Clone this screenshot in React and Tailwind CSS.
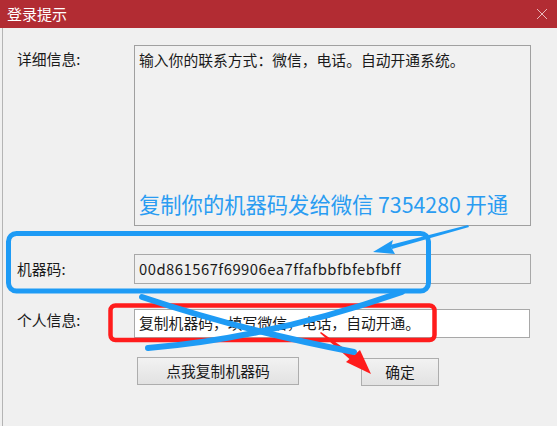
import React from "react";

const font = { fontFamily: '"Noto Sans CJK SC", "Noto Sans", sans-serif' };

function Annotations() {
  return (
    <svg
      className="absolute left-0 top-0 pointer-events-none"
      width="557"
      height="426"
      viewBox="0 0 557 426"
    >
      {/* blue box round machine code */}
      <rect x="8.5" y="233.5" width="420" height="57.5" rx="8" fill="none" stroke="#1e9bf5" strokeWidth="5" />
      {/* blue arrow */}
      <polygon points="468,225 469,227 392,249 390,245" fill="#1e9bf5" />
      <polygon points="373,252 393,240 391,247 395,254" fill="#1e9bf5" />
      {/* red box */}
      <rect x="110.5" y="305.5" width="324" height="34.5" rx="5" fill="none" stroke="#ff1c1c" strokeWidth="4.5" />
      {/* red arrow */}
      <polygon points="320,333 321,332 358,358 354,363" fill="#ff1c1c" />
      <polygon points="371,374 346,362 360,350" fill="#ff1c1c" />
      {/* blue cross scribble */}
      <path d="M142 297 Q 240 330 354 352" fill="none" stroke="#1e9bf5" strokeWidth="6" strokeLinecap="round" />
      <path d="M148 348 Q 270 338 402 292" fill="none" stroke="#1e9bf5" strokeWidth="6" strokeLinecap="round" />
    </svg>
  );
}

export default function App() {
  return (
    <div className="relative w-[557px] h-[426px] bg-[#f0f0f0] overflow-hidden" style={font}>
      {/* Title bar */}
      <div className="h-[28px] bg-[#b22c33] flex items-center justify-between pl-[7px] pr-[8px]">
        <span className="text-white text-[15px]">登录提示</span>
        <svg width="12" height="12" viewBox="0 0 12 12" className="mr-[1px]">
          <path d="M1 1 L11 11 M11 1 L1 11" stroke="#e9b9bb" strokeWidth="1" />
        </svg>
      </div>

      {/* Body */}
      <div className="ml-[2px] h-[398px] border-l border-[#b4b4b4] pl-[14px] pt-[17px] text-[14.8px] text-[#1a1a1a]">
        {/* details */}
        <div className="flex items-start">
          <div className="w-[117px] pt-[3px]">详细信息:</div>
          <div className="w-[397px] h-[181px] border border-[#a0a0a0] bg-[#f1f1f1] flex flex-col pl-[4px] pt-[3px] pb-[8px]">
            <div>输入你的联系方式：微信，电话。自动开通系统。</div>
            <div className="mt-auto text-[21.3px] text-[#2a9cf2] leading-[26px]">复制你的机器码发给微信 7354280 开通</div>
          </div>
        </div>

        {/* machine code */}
        <div className="flex items-center mt-[28px]">
          <div className="w-[117px]">机器码:</div>
          <div className="w-[397px] h-[30px] border border-[#a8a8a8] bg-[#f0f0f0] flex items-center pl-[4px] tracking-[0.5px]">
            00d861567f69906ea7ffafbbfbfebfbff
          </div>
        </div>

        {/* personal info */}
        <div className="flex items-start mt-[25px]">
          <div className="w-[117px]">个人信息:</div>
          <div className="w-[396px] h-[29px] border border-[#a8a8a8] bg-white flex items-center pl-[4px]">
            复制机器码，填写微信，电话，自动开通。
          </div>
        </div>

        {/* buttons */}
        <div className="flex mt-[19px] pl-[120px]">
          <button className="w-[162px] h-[28px] border border-[#adadad] bg-gradient-to-b from-[#f2f2f2] to-[#e2e2e2] text-[14.8px]">
            点我复制机器码
          </button>
          <button className="ml-[62px] mt-[1px] w-[78px] h-[28px] border border-[#adadad] bg-gradient-to-b from-[#f2f2f2] to-[#e2e2e2] text-[14.8px]">
            确定
          </button>
        </div>
      </div>

      <Annotations />
    </div>
  );
}
